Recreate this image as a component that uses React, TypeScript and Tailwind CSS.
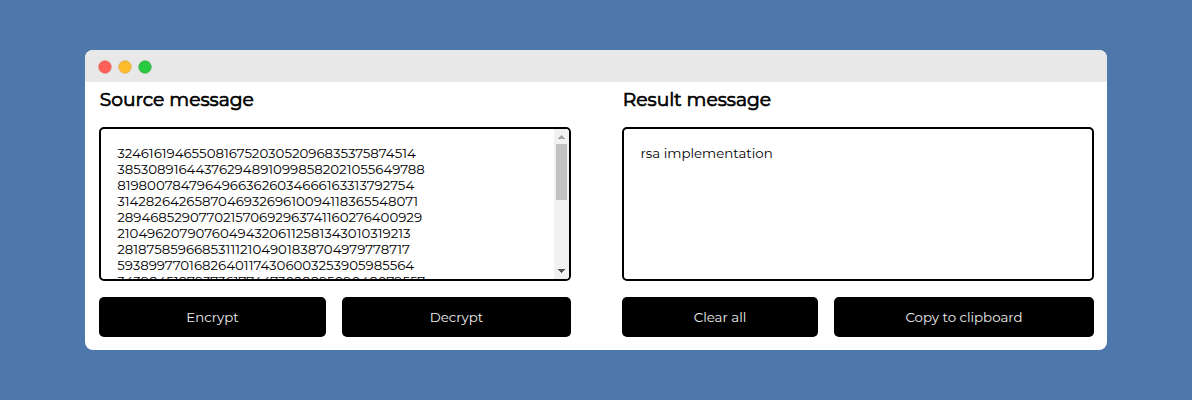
const cipherLines = [
  '324616194655081675203052096835375874514',
  '385308916443762948910998582021055649788',
  '81980078479649663626034666163313792754',
  '314282642658704693269610094118365548071',
  '289468529077021570692963741160276400929',
  '210496207907604943206112581343010319213',
  '281875859668531112104901838704979778717',
  '59389977016826401174306003253905985564',
  '343984518793736177447302889509048079557',
];

function Button({ label, className }: { label: string; className: string }) {
  return (
    <button className={`h-10 rounded-[5px] bg-black text-center text-[13.3333px] leading-4 text-[#eeeeee] ${className}`}>
      {label}
    </button>
  );
}

function Heading({ children }: { children: string }) {
  return (
    <h3 className="h-[45px] pt-[6px] pl-[0.7px] text-[18.72px] leading-[23px] font-normal [-webkit-text-stroke:0.7px_black]">
      {children}
    </h3>
  );
}

function Scrollbar() {
  return (
    <div className="flex w-[15px] shrink-0 flex-col items-center rounded-r-[2px] bg-[#f1f1f1]">
      <svg className="h-[15px] w-[15px] shrink-0" viewBox="0 0 15 15" shapeRendering="crispEdges">
        <path d="M7 6h1v1h1v1h1v1h1v1H4V9h1V8h1V7h1z" fill="#a3a3a3" />
      </svg>
      <div className="h-14 w-[11px] bg-[#c1c1c1]" />
      <svg className="mt-auto h-[15px] w-[15px] shrink-0" viewBox="0 0 15 15" shapeRendering="crispEdges">
        <path d="M4 5h7v1h-1v1H9v1H8v1H7V8H6V7H5V6H4z" fill="#505050" />
      </svg>
    </div>
  );
}

export default function App() {
  return (
    <main className="flex h-[400px] w-[1192px] items-center justify-center bg-[#4e77ab] font-['Montserrat','Inter',sans-serif] text-black">
      <div className="h-[300px] w-[1022px] overflow-hidden rounded-lg bg-white">
        <header className="h-8 bg-[#e8e8e8] pt-[9px] pl-[12px]">
          <svg className="block h-4 w-14" viewBox="0 0 56 16">
            <circle cx="8" cy="8" r="6.2" fill="#ff6057" stroke="#e8615a" strokeWidth="0.8" />
            <circle cx="28" cy="8" r="6.2" fill="#ffbd2e" stroke="#dfa443" strokeWidth="0.8" />
            <circle cx="48" cy="8" r="6.2" fill="#27c93f" stroke="#3dae48" strokeWidth="0.8" />
          </svg>
        </header>
        <div className="flex justify-between pr-[13px] pl-[14px]">
          <section className="w-[472px]">
            <Heading>Source message</Heading>
            <div className="flex h-[154px] overflow-hidden rounded-[5px] border-2 border-black">
              <div className="flex-1 pt-4 pl-[16.2px] text-[13.3333px] leading-4 whitespace-nowrap">
                {cipherLines.map((line) => (
                  <div key={line}>{line}</div>
                ))}
              </div>
              <Scrollbar />
            </div>
            <div className="mt-4 flex gap-4">
              <Button label="Encrypt" className="w-[227px]" />
              <Button label="Decrypt" className="w-[229px]" />
            </div>
          </section>
          <section className="w-[472px]">
            <Heading>Result message</Heading>
            <div className="h-[154px] rounded-[5px] border-2 border-black pt-4 pl-[16.5px] text-[13.3333px] leading-4">
              rsa implementation
            </div>
            <div className="mt-4 flex gap-4">
              <Button label="Clear all" className="w-[196px]" />
              <Button label="Copy to clipboard" className="w-[260px]" />
            </div>
          </section>
        </div>
      </div>
    </main>
  );
}
